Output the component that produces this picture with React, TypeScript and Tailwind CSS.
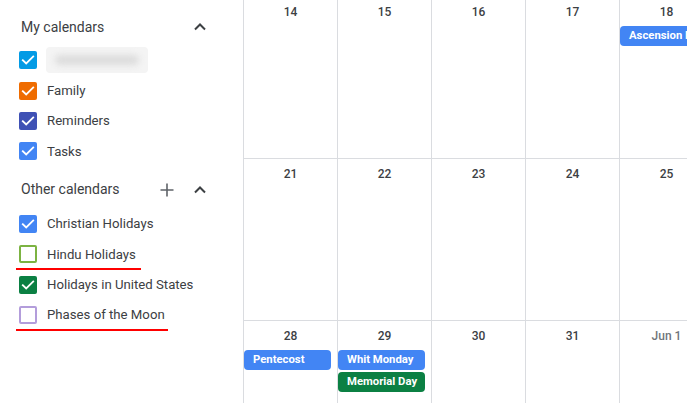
import React from "react";

const Check = () => (
  <svg width="18" height="18" viewBox="0 0 18 18" className="block">
    <path d="M3.8 9.2 L7.2 12.5 L14.2 5.6" stroke="white" strokeWidth="1.8" fill="none" strokeLinecap="square" />
  </svg>
);

function Box({ color, checked }: { color: string; checked: boolean }) {
  return checked ? (
    <div className="w-[18px] h-[18px] rounded-[2px] shrink-0" style={{ backgroundColor: color }}>
      <Check />
    </div>
  ) : (
    <div className="w-[18px] h-[18px] rounded-[2px] shrink-0 border-2 bg-white" style={{ borderColor: color }} />
  );
}

const ChevronUp = () => (
  <svg width="16" height="16" viewBox="0 0 16 16" className="block">
    <path d="M3 10.5 L8 5.5 L13 10.5" stroke="#3c4043" strokeWidth="2" fill="none" />
  </svg>
);

const Plus = () => (
  <svg width="16" height="16" viewBox="0 0 16 16" className="block">
    <path d="M8 1.5 V14.5 M1.5 8 H14.5" stroke="#5f6368" strokeWidth="1.6" fill="none" />
  </svg>
);

function Item({ color, checked, label, underline }: { color: string; checked: boolean; label: React.ReactNode; underline?: number }) {
  return (
    <div className="relative h-[30.4px] flex items-center pl-[19px]">
      <Box color={color} checked={checked} />
      <div className="ml-[10px] text-[13.2px] text-[#3c4043] leading-none">{label}</div>
      {underline ? (
        <div className="absolute left-[16px] bottom-[-1px] h-[2px] bg-[#ff0000]" style={{ width: underline }} />
      ) : null}
    </div>
  );
}

function Chip({ label, color }: { label: string; color: string }) {
  return (
    <div
      className="h-[20px] rounded-[4px] text-white text-[11.3px] font-bold leading-[20px] pl-[9px] whitespace-nowrap overflow-hidden"
      style={{ backgroundColor: color }}
    >
      {label}
    </div>
  );
}

type Cell = { d: string; gray?: boolean; chips?: { label: string; color: string }[] };

function Row({ cells, first }: { cells: Cell[]; first?: boolean }) {
  return (
    <div className={`flex shrink-0 ${first ? "h-[158px]" : "h-[162px] border-t border-[#dadce0]"}`}>
      {cells.map((c, i) => (
        <div key={i} className="w-[94px] shrink-0 border-l border-[#dadce0] flex flex-col">
          <div className={`${first ? "pt-0" : "pt-[3px]"} h-[24px] box-content text-center text-[12px] font-medium leading-[24px] ${c.gray ? "text-[#70757a]" : "text-[#3c4043]"}`}>
            {c.d}
          </div>
          <div className={`flex flex-col gap-[2px] pr-[6px] mt-[2px]`}>
            {(c.chips || []).map((ch, j) => (
              <Chip key={j} label={ch.label} color={ch.color} />
            ))}
          </div>
        </div>
      ))}
    </div>
  );
}

export default function App() {
  const blue = "#4285f4";
  return (
    <div className="w-[687px] h-[403px] overflow-hidden flex bg-white" style={{ fontFamily: "Roboto, 'Liberation Sans', sans-serif" }}>
      <div className="w-[243px] shrink-0 pt-[17px]">
        <div className="h-[20px] flex items-center pl-[21px] pr-[35px] justify-between">
          <span className="text-[14px] text-[#3c4043]">My calendars</span>
          <ChevronUp />
        </div>
        <div className="mt-[8px]">
          <div className="relative h-[30.4px] flex items-center pl-[19px]">
            <Box color="#039be5" checked />
            <div className="ml-[9px] w-[102px] h-[26px] rounded-[4px] bg-[#f4f4f4] flex items-center justify-center">
              <div className="w-[84px] h-[10px] rounded-full bg-[#dcdcdc] blur-[3px]" />
            </div>
          </div>
          <Item color="#ef6c00" checked label="Family" />
          <Item color="#3f51b5" checked label="Reminders" />
          <Item color="#4285f4" checked label="Tasks" />
        </div>
        <div className="mt-[13px] h-[20px] flex items-center pl-[21px] pr-[35px]">
          <span className="text-[14px] text-[#3c4043] flex-1">Other calendars</span>
          <div className="mr-[17px]"><Plus /></div>
          <ChevronUp />
        </div>
        <div className="mt-[9px]">
          <Item color="#4285f4" checked label="Christian Holidays" />
          <Item color="#7cb342" checked={false} label="Hindu Holidays" underline={125} />
          <Item color="#0b8043" checked label="Holidays in United States" />
          <Item color="#b39ddb" checked={false} label="Phases of the Moon" underline={152} />
        </div>
      </div>
      <div className="flex flex-col shrink-0">
        <Row
          first
          cells={[
            { d: "14" },
            { d: "15" },
            { d: "16" },
            { d: "17" },
            { d: "18", chips: [{ label: "Ascension Day", color: blue }] },
          ]}
        />
        <Row cells={[{ d: "21" }, { d: "22" }, { d: "23" }, { d: "24" }, { d: "25" }]} />
        <Row
          cells={[
            { d: "28", chips: [{ label: "Pentecost", color: blue }] },
            {
              d: "29",
              chips: [
                { label: "Whit Monday", color: blue },
                { label: "Memorial Day", color: "#0b8043" },
              ],
            },
            { d: "30" },
            { d: "31" },
            { d: "Jun 1", gray: true },
          ]}
        />
      </div>
    </div>
  );
}
